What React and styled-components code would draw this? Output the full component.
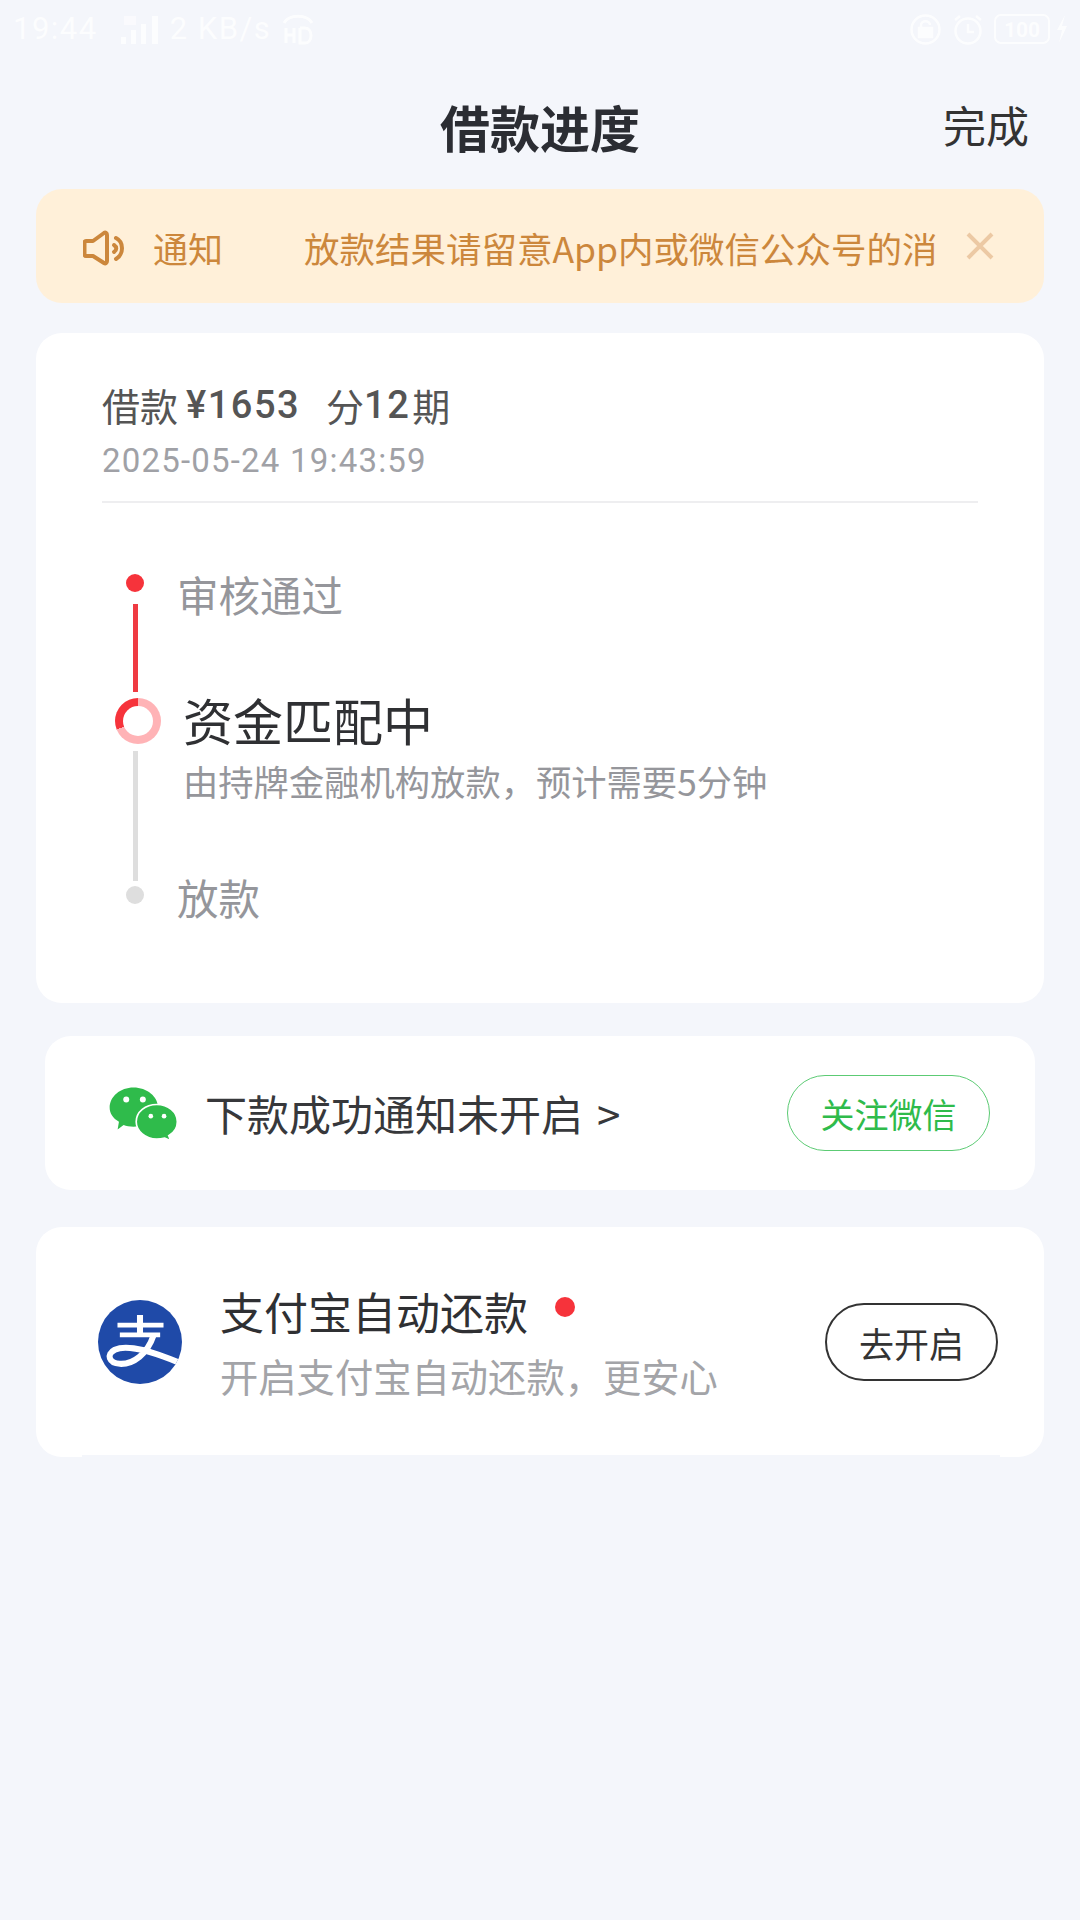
import React from 'react'
import styled, { createGlobalStyle } from 'styled-components'

const GlobalStyle = createGlobalStyle`
  html, body {
    margin: 0;
    padding: 0;
    background: #f4f6fb;
  }
  body {
    font-family: "Noto Sans CJK SC", "Noto Sans", sans-serif;
  }
  * {
    box-sizing: border-box;
  }
`

const Page = styled.div`
  width: 1080px;
  height: 1920px;
  background: #f4f6fb;
  overflow: hidden;
`

/* status bar */
const StatusBar = styled.div`
  height: 50px;
  padding: 8px 12px 0 13px;
  display: flex;
  align-items: center;
  justify-content: space-between;
  color: #fff;
  opacity: 0.8;
`
const StatusGroup = styled.div`
  display: flex;
  align-items: center;
  gap: ${props => props.$gap || 10}px;
`
const StatusText = styled.span`
  font-family: Roboto, sans-serif;
  font-size: ${props => props.$size || 31}px;
  line-height: 34px;
  letter-spacing: 1.5px;
`
const SignalIcon = styled.svg`
  margin-left: 12px;
`

/* nav */
const Nav = styled.div`
  height: 139px;
  padding: 12px 51px 0;
  display: grid;
  grid-template-columns: 1fr auto 1fr;
  align-items: center;
`
const NavTitle = styled.h1`
  margin: 0;
  font-size: 50px;
  line-height: 60px;
  font-weight: 700;
  color: #2b2d33;
  grid-column: 2;
`
const NavAction = styled.span`
  margin-bottom: 4px;
  font-size: 43px;
  line-height: 50px;
  color: #333;
  justify-self: end;
`

/* notice */
const Notice = styled.div`
  height: 114px;
  margin: 0 36px;
  padding: 3px 0 0 47px;
  display: flex;
  align-items: center;
  background: #fff0d9;
  border-radius: 26px;
  color: #cc873c;
`
const NoticeLabel = styled.span`
  width: 179px;
  padding-left: 28px;
  font-size: 35px;
  line-height: 44px;
`
const NoticeText = styled.div`
  width: 630px;
  font-size: 35.5px;
  line-height: 44px;
  white-space: nowrap;
`
const NoticeClose = styled.svg`
  width: 28px;
  height: 28px;
  margin: -3px 0 0 32px;
`

/* cards */
const Card = styled.div`
  position: relative;
  margin: ${props => props.$top}px ${props => props.$side}px 0;
  height: ${props => props.$height}px;
  background: #fff;
  border-radius: 26px;
`
const LoanCard = styled(Card)`
  padding: 49px 66px 0;
`
const LoanAmount = styled.div`
  display: flex;
  align-items: center;
  font-size: 38px;
  line-height: 46px;
  color: #555;
`
const LoanNumber = styled.span`
  font-family: Roboto, sans-serif;
  font-weight: 500;
  font-size: 38px;
  letter-spacing: 1.5px;
  margin: ${props => props.$margin || '0'};
`
const LoanUnit = styled.span`
  margin-left: ${props => props.$left || 0}px;
`
const LoanDate = styled.div`
  margin-top: 13px;
  font-family: Roboto, sans-serif;
  font-size: 33px;
  line-height: 40px;
  letter-spacing: 1.2px;
  color: #a0a1a6;
`
const Divider = styled.div`
  height: 2px;
  margin-top: 20px;
  background: #eeeef0;
`

/* timeline */
const Timeline = styled.div`
  margin-top: 71px;
  margin-left: 8px;
`
const Step = styled.div`
  display: flex;
  height: ${props => props.$height}px;
`
const Rail = styled.div`
  width: 50px;
  flex: none;
  display: flex;
  flex-direction: column;
  align-items: center;
`
const Dot = styled.div`
  width: 18px;
  height: 18px;
  flex: none;
  border-radius: 50%;
  background: ${props => props.$color};
`
const Line = styled.div`
  width: 5px;
  height: ${props => props.$height}px;
  margin-top: ${props => props.$gap}px;
  background: ${props => props.$color};
`
const Ring = styled.div`
  width: 46px;
  height: 46px;
  flex: none;
  margin-left: 5px;
  border-radius: 50%;
  background: conic-gradient(#ffb3b6 0 69%, #f6333b 69% 100%);
  display: flex;
  align-items: center;
  justify-content: center;
  &::after {
    content: '';
    width: 30px;
    height: 30px;
    border-radius: 50%;
    background: #fff;
  }
`
const StepBody = styled.div`
  margin-left: ${props => props.$indent}px;
  margin-top: ${props => props.$top || 0}px;
`
const StepLabel = styled.div`
  font-size: 41.5px;
  line-height: 40px;
  color: #95969b;
`
const StepTitle = styled.div`
  font-size: 50px;
  line-height: 50px;
  color: #2f3033;
`
const StepDesc = styled.div`
  margin-top: 17px;
  font-size: 35.3px;
  line-height: 40px;
  color: #95969b;
`

/* wechat row */
const RowCard = styled(Card)`
  display: flex;
  align-items: center;
`
const WechatLogo = styled.svg`
  width: 73px;
  height: 57px;
  margin-left: 62px;
  flex: none;
`
const WechatText = styled.div`
  margin-left: 25px;
  flex: 1;
  font-size: 42px;
  line-height: 50px;
  color: #37383b;
`
const WechatArrow = styled.span`
  margin-left: 14px;
`
const PillButton = styled.div`
  flex: none;
  width: ${props => props.$width}px;
  height: ${props => props.$height}px;
  margin-right: ${props => props.$right}px;
  border: ${props => props.$border};
  border-radius: 40px;
  display: flex;
  align-items: center;
  justify-content: center;
  font-size: ${props => props.$size}px;
  color: ${props => props.$color};
`

/* alipay row */
const AlipayLogo = styled.svg`
  width: 84px;
  height: 84px;
  margin-left: 62px;
  flex: none;
`
const AlipayBody = styled.div`
  margin-left: 38px;
  flex: 1;
`
const AlipayTitle = styled.div`
  display: flex;
  align-items: center;
  font-size: 44px;
  line-height: 54px;
  color: #2f3033;
`
const RedDot = styled.span`
  width: 20px;
  height: 20px;
  margin: -8px 0 0 27px;
  border-radius: 50%;
  background: #f6333b;
`
const AlipayDesc = styled.div`
  margin-top: 14px;
  font-size: 38.3px;
  line-height: 48px;
  color: #a3a4a8;
`
const CardEdge = styled.div`
  position: absolute;
  left: 46px;
  right: 44px;
  bottom: 0;
  height: 2px;
  background: #f4f6fb;
`

const App = () => {
  return (
    <Page>
      <GlobalStyle />
      <StatusBar>
        <StatusGroup $gap={10}>
          <StatusText>19:44</StatusText>
          <SignalIcon width="40" height="30" viewBox="0 0 40 30" fill="#fff">
            <rect x="1" y="23" width="5" height="7" />
            <rect x="11" y="16" width="5" height="14" />
            <rect x="21" y="10" width="5" height="20" />
            <rect x="32" y="2" width="6" height="28" />
            <rect x="4" y="2" width="12" height="9" opacity="0.7" />
          </SignalIcon>
          <StatusText>2 KB/s</StatusText>
          <svg width="34" height="32" viewBox="0 0 34 32" fill="none" stroke="#fff" strokeWidth="3">
            <path d="M3 10 C8 1 26 1 31 10" />
            <path d="M5 15 V30 M5 22 H13 M13 15 V30 M19 15 V30 H24 C32 30 32 15 24 15 H19" />
          </svg>
        </StatusGroup>
        <StatusGroup $gap={10}>
          <svg width="33" height="33" viewBox="0 0 33 33" fill="none" stroke="#fff" strokeWidth="2.5">
            <circle cx="16.5" cy="16.5" r="14" />
            <rect x="10" y="15" width="13" height="9" fill="#fff" />
            <path d="M12 15 V12 C12 7 21 7 21 12" />
          </svg>
          <svg width="32" height="33" viewBox="0 0 32 33" fill="none" stroke="#fff" strokeWidth="2.5">
            <circle cx="16" cy="18" r="12.5" />
            <path d="M16 11 V19 H22 M3 7 L8 3 M29 7 L24 3" />
          </svg>
          <svg width="74" height="30" viewBox="0 0 74 30" fill="none" stroke="#fff" strokeWidth="2">
            <rect x="1" y="1" width="54" height="28" rx="6" />
            <text x="28" y="23" textAnchor="middle" fill="#fff" stroke="none" fontFamily="Roboto, sans-serif" fontWeight="700" fontSize="21">100</text>
            <path d="M71 1 L63 16 H68 L65 29 L73 12 H68 Z" fill="#fff" stroke="none" />
          </svg>
        </StatusGroup>
      </StatusBar>

      <Nav>
        <NavTitle>借款进度</NavTitle>
        <NavAction>完成</NavAction>
      </Nav>

      <Notice>
        <svg width="42" height="36" viewBox="0 0 42 36" fill="none" stroke="#cc873c" strokeWidth="4" strokeLinejoin="round" strokeLinecap="round">
          <path d="M3 11 H10 L21 3 C22.5 2 24 3 24 5 V31 C24 33 22.5 34 21 33 L10 26 H3 C2 26 1.5 25 1.5 24 V13 C1.5 12 2 11 3 11 Z" />
          <path d="M31 15 C34 17 34 20 31 22" />
          <path d="M33 8 C41 12 41 24 33 29" />
        </svg>
        <NoticeLabel>通知</NoticeLabel>
        <NoticeText>放款结果请留意App内或微信公众号的消</NoticeText>
        <NoticeClose viewBox="0 0 28 28" stroke="#ecc9a4" strokeWidth="4">
          <path d="M2 2 L26 26 M26 2 L2 26" />
        </NoticeClose>
      </Notice>

      <LoanCard $top={30} $side={36} $height={670}>
        <LoanAmount>
          借款
          <LoanNumber $margin="0 0 0 8px">¥1653</LoanNumber>
          <LoanUnit $left={26}>分</LoanUnit>
          <LoanNumber>12</LoanNumber>
          <LoanUnit $left={2}>期</LoanUnit>
        </LoanAmount>
        <LoanDate>2025-05-24 19:43:59</LoanDate>
        <Divider />
        <Timeline>
          <Step $height={124}>
            <Rail>
              <Dot $color="#f6333b" />
              <Line $color="#ef3b42" $gap={12} $height={88} />
            </Rail>
            <StepBody $indent={17}>
              <StepLabel>审核通过</StepLabel>
            </StepBody>
          </Step>
          <Step $height={188}>
            <Rail>
              <Ring />
              <Line $color="#dedede" $gap={7} $height={130} />
            </Rail>
            <StepBody $indent={23} $top={-4}>
              <StepTitle>资金匹配中</StepTitle>
              <StepDesc>由持牌金融机构放款，预计需要5分钟</StepDesc>
            </StepBody>
          </Step>
          <Step $height={18}>
            <Rail>
              <Dot $color="#dedede" />
            </Rail>
            <StepBody $indent={17} $top={-9}>
              <StepLabel>放款</StepLabel>
            </StepBody>
          </Step>
        </Timeline>
      </LoanCard>

      <RowCard $top={33} $side={45} $height={154}>
        <WechatLogo viewBox="230 160 220 170">
          <path d="M310 167 C350 167 384 194 384 228 C384 262 350 285 310 285 C298 285 288 283 280 280 L262 293 L266 270 C248 260 238 245 238 228 C238 194 270 167 310 167 Z" fill="#2fbb4b" />
          <path d="M380 218 C414 218 442 240 442 270 C442 288 432 303 416 312 L422 327 L404 319 C396 321 388 322 380 322 C346 322 318 298 318 270 C318 240 346 218 380 218 Z" fill="#2fbb4b" stroke="#fff" strokeWidth="5" />
          <circle cx="288" cy="203" r="9" fill="#fff" />
          <circle cx="338" cy="203" r="9" fill="#fff" />
          <circle cx="362" cy="253" r="7" fill="#fff" />
          <circle cx="402" cy="253" r="7" fill="#fff" />
        </WechatLogo>
        <WechatText>下款成功通知未开启<WechatArrow>&gt;</WechatArrow></WechatText>
        <PillButton $width={203} $height={76} $right={45} $border="1.5px solid #5ccb74" $size={34} $color="#2fbb4b">
          关注微信
        </PillButton>
      </RowCard>

      <RowCard $top={37} $side={36} $height={230}>
        <AlipayLogo viewBox="85 90 250 250">
          <defs>
            <clipPath id="alipayClip">
              <circle cx="210" cy="215" r="125" />
            </clipPath>
          </defs>
          <circle cx="210" cy="215" r="125" fill="#1f4aa8" />
          <g clipPath="url(#alipayClip)" fill="none" stroke="#fff">
            <path d="M143 165 H280 M150 194 H270" strokeWidth="14" />
            <path d="M210 135 V190" strokeWidth="18" />
            <path d="M250 196 C232 250 190 282 150 280 C118 278 108 252 135 238 C175 220 250 245 330 278" strokeWidth="18" />
          </g>
        </AlipayLogo>
        <AlipayBody>
          <AlipayTitle>
            支付宝自动还款
            <RedDot />
          </AlipayTitle>
          <AlipayDesc>开启支付宝自动还款，更安心</AlipayDesc>
        </AlipayBody>
        <PillButton $width={173} $height={78} $right={46} $border="2px solid #333" $size={35} $color="#333">
          去开启
        </PillButton>
        <CardEdge />
      </RowCard>
    </Page>
  )
}

export default App
